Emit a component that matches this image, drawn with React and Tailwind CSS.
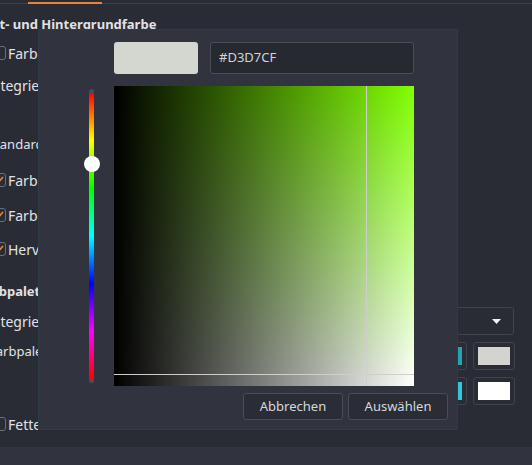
import React from 'react';

const Box = ({ checked }) => (
  <span className="w-[14px] h-[14px] shrink-0 rounded-[3px] border border-[#6c6f78] flex items-center justify-center">
    {checked && (
      <svg width="12" height="12" viewBox="0 0 12 12">
        <path d="M2.5 6.5 L5 9 L10 3" fill="none" stroke="#f0803a" strokeWidth="1.6" />
      </svg>
    )}
  </span>
);

const CheckRow = ({ checked, label, className }) => (
  <div className={`h-[18px] flex items-center gap-[2px] -ml-[8px] text-[14px] whitespace-nowrap ${className}`}>
    <Box checked={checked} />
    <span>{label}</span>
  </div>
);

const swatches = [
  ['#27a2b5', '#d3d3cf'],
  ['#30c6de', '#ffffff'],
];

const App = () => {
  return (
    <div className="relative w-[532px] h-[465px] overflow-hidden bg-[#292c35] font-['Noto_Sans',sans-serif] text-[13px] text-[#e1e2e5] flex flex-col">
      {/* tab strip */}
      <div className="h-[4px] shrink-0 border-b border-[#3e414b]">
        <div className="ml-[28px] mt-[2px] w-[74px] h-[2px] bg-[#f0803a]" />
      </div>

      <div className="mt-[12px] h-[18px] flex items-center -ml-[22px] font-bold whitespace-nowrap">
        Text- und Hintergrundfarbe
      </div>
      <CheckRow className="mt-[10px]" label="Farbe für Text verwenden" />
      <div className="mt-[14px] h-[18px] flex items-center -ml-[13px] text-[14px] whitespace-nowrap">Integriertes Schema:</div>

      <div className="mt-[42px] h-[18px] flex items-center -ml-[12px] whitespace-nowrap">Standardfarben</div>
      <CheckRow className="mt-[17px]" checked label="Farbe für Vordergrund" />
      <CheckRow className="mt-[17px]" checked label="Farbe für Hintergrund" />
      <CheckRow className="mt-[16px]" checked label="Hervorhebung" />

      <div className="mt-[25px] h-[18px] flex items-center -ml-[22px] font-bold whitespace-nowrap">Farbpalette</div>
      <div className="mt-[6px] h-[28px] flex items-center justify-between">
        <span className="-ml-[13px] text-[14px] whitespace-nowrap">Integrierte Palette:</span>
        <div className="mr-[18px] w-[160px] h-[28px] rounded-[3px] border border-[#40434c] flex items-center justify-end pr-[12px]">
          <svg width="9" height="5" viewBox="0 0 9 5">
            <polygon points="0,0 9,0 4.5,5" fill="#f2f2f2" />
          </svg>
        </div>
      </div>
      <div className="mt-[7px] flex items-start justify-between">
        <span className="-ml-[11px] h-[20px] flex items-center whitespace-nowrap">Farbpalette:</span>
        <div className="mr-[17px] flex flex-col gap-[7px]">
          {swatches.map((row, i) => (
            <div key={i} className="flex gap-[6px]">
              {row.map((c, j) => (
                <div key={j} className="w-[42px] h-[28px] rounded-[3px] border border-[#40434c] p-[4px]">
                  <div className="w-full h-full" style={{ backgroundColor: c }} />
                </div>
              ))}
            </div>
          ))}
        </div>
      </div>
      <CheckRow className="mt-[10px]" label="Fetter Text" />

      <div className="mt-auto h-[18px] shrink-0 bg-[#31343e]" />

      {/* colour dialog */}
      <div className="absolute left-[38px] top-[29px] w-[420px] h-[401px] bg-[#31343e] border border-[#2d3c47] flex flex-col">
        <div className="mt-[12px] ml-[75px] h-[32px] flex gap-[12px]">
          <div className="w-[84px] h-full rounded-[3px] bg-[#d3d7cf]" />
          <div className="w-[204px] h-full rounded-[3px] bg-[#262930] border border-[#4a4d57] pl-[8px] flex items-center text-[#d2d4d8]">
            #D3D7CF
          </div>
        </div>

        <div className="mt-[12px] h-[300px] flex">
          <div className="w-[75px] pl-[50px]">
            <div className="relative mt-[3px] w-[5px] h-[294px] rounded-full bg-[#4a4d57] py-[4px]">
              <div className="w-full h-full bg-[linear-gradient(to_bottom,#f00,#ff0,#0f0,#0ff,#00f,#f0f,#f00)]" />
              <div className="absolute left-1/2 top-[67px] -translate-x-1/2 w-[16px] h-[16px] rounded-full bg-white" />
            </div>
          </div>
          <div className="relative w-[300px] h-[300px] bg-[linear-gradient(to_bottom,#80ff00,#ffffff)]">
            <div className="absolute inset-0 bg-[linear-gradient(to_right,#000000,transparent)]" />
            <div className="absolute top-0 bottom-0 left-[252px] w-[1px] bg-[#cdcfcb]" />
            <div className="absolute left-0 right-0 top-[288px] h-[1px] bg-[#cdcfcb]" />
          </div>
        </div>

        <div className="mt-[7px] pr-[9px] h-[27px] flex justify-end gap-[5px]">
          <button className="w-[100px] h-full rounded-[3px] bg-[#2a2d36] border border-[#4a4d56] text-[#d6d8dc]">
            Abbrechen
          </button>
          <button className="w-[100px] h-full rounded-[3px] bg-[#2a2d36] border border-[#4a4d56] text-[#d6d8dc]">
            Auswählen
          </button>
        </div>
      </div>
    </div>
  );
};

export default App;
